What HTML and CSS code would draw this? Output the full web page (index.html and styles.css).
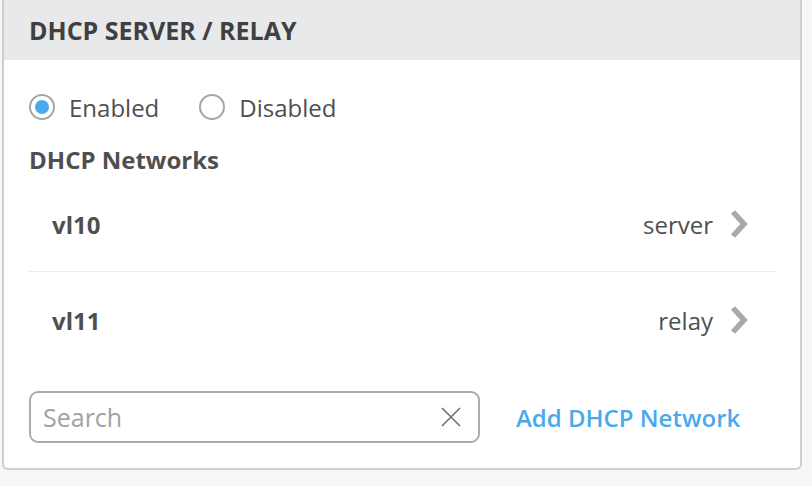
FILE: index.html
```html
<!DOCTYPE html>
<html>
<head>
<meta charset="utf-8">
<link rel="stylesheet" href="styles.css">
</head>
<body>
<div class="panel">
  <div class="panel-header">DHCP SERVER / RELAY</div>
  <div class="panel-body">
    <div class="radios">
      <label class="radio"><span class="dot checked"></span>Enabled</label>
      <label class="radio"><span class="dot"></span>Disabled</label>
    </div>
    <div class="section-title">DHCP Networks</div>
    <div class="list">
      <div class="row">
        <span class="name">vl10</span>
        <span class="mode">server</span>
        <svg class="chev" width="20" height="30" viewBox="0 0 20 30"><path d="M4 3 L15 15 L4 27" fill="none" stroke="#a9a9a9" stroke-width="5.5" stroke-linejoin="miter"/></svg>
      </div>
      <div class="row">
        <span class="name">vl11</span>
        <span class="mode">relay</span>
        <svg class="chev" width="20" height="30" viewBox="0 0 20 30"><path d="M4 3 L15 15 L4 27" fill="none" stroke="#a9a9a9" stroke-width="5.5" stroke-linejoin="miter"/></svg>
      </div>
    </div>
    <div class="footer">
      <div class="search">
        <span class="placeholder">Search</span>
        <svg class="clear" width="22" height="22" viewBox="0 0 22 22"><path d="M2 2 L20 20 M20 2 L2 20" stroke="#6f6f6f" stroke-width="1.6"/></svg>
      </div>
      <a class="add">Add DHCP Network</a>
    </div>
  </div>
</div>
</body>
</html>
```
FILE: styles.css
```css
html, body {
  margin: 0;
  padding: 0;
  background: #f6f6f6;
  font-family: "Open Sans", "Liberation Sans", sans-serif;
  color: #4f4f4f;
}
.panel {
  margin-left: 2px;
  width: 800px;
  height: 470px;
  box-sizing: border-box;
  background: #fff;
  border: 2px solid #cfcfcf;
  border-top: none;
  border-radius: 0 0 6px 6px;
  display: flex;
  flex-direction: column;
}
.panel-header {
  height: 60px;
  flex: none;
  background: #e8e9eb;
  display: flex;
  align-items: center;
  padding-left: 25px;
  font-size: 25px;
  font-weight: 700;
  color: #404040;
}
.panel-body {
  padding: 0 24px 0 25px;
}
.radios {
  display: flex;
  align-items: center;
  gap: 40px;
  margin-top: 33px;
  height: 28px;
  font-size: 24px;
}
.radio {
  display: flex;
  align-items: center;
  gap: 14px;
}
.dot {
  width: 22px;
  height: 22px;
  border: 2px solid #a6a6a6;
  border-radius: 50%;
  box-sizing: content-box;
  display: inline-block;
  position: relative;
}
.dot.checked::after {
  content: "";
  position: absolute;
  left: 4px;
  top: 4px;
  width: 14px;
  height: 14px;
  border-radius: 50%;
  background: #4aa9ec;
}
.section-title {
  margin-top: 22px;
  font-size: 24px;
  font-weight: 700;
  height: 34px;
  line-height: 34px;
}
.row {
  display: flex;
  align-items: center;
  height: 96px;
  padding-left: 23px;
  padding-right: 27px;
  box-sizing: border-box;
  font-size: 24px;
}
.row:first-child {
  height: 95px;
  border-bottom: 1px solid #ececec;
}
.name {
  font-weight: 700;
  flex: 1;
}
.mode {
  margin-right: 16px;
}
.footer {
  display: flex;
  align-items: center;
  margin-top: 23px;
}
.search {
  width: 451px;
  height: 52px;
  box-sizing: border-box;
  border: 2px solid #ababab;
  border-radius: 9px;
  display: flex;
  align-items: center;
  justify-content: space-between;
  padding: 0 16px 0 12px;
}
.placeholder {
  font-size: 25px;
  color: #a2a2a2;
}
.add {
  margin-left: 36px;
  color: #4aa9ec;
  font-size: 24px;
  font-weight: 600;
}
```
